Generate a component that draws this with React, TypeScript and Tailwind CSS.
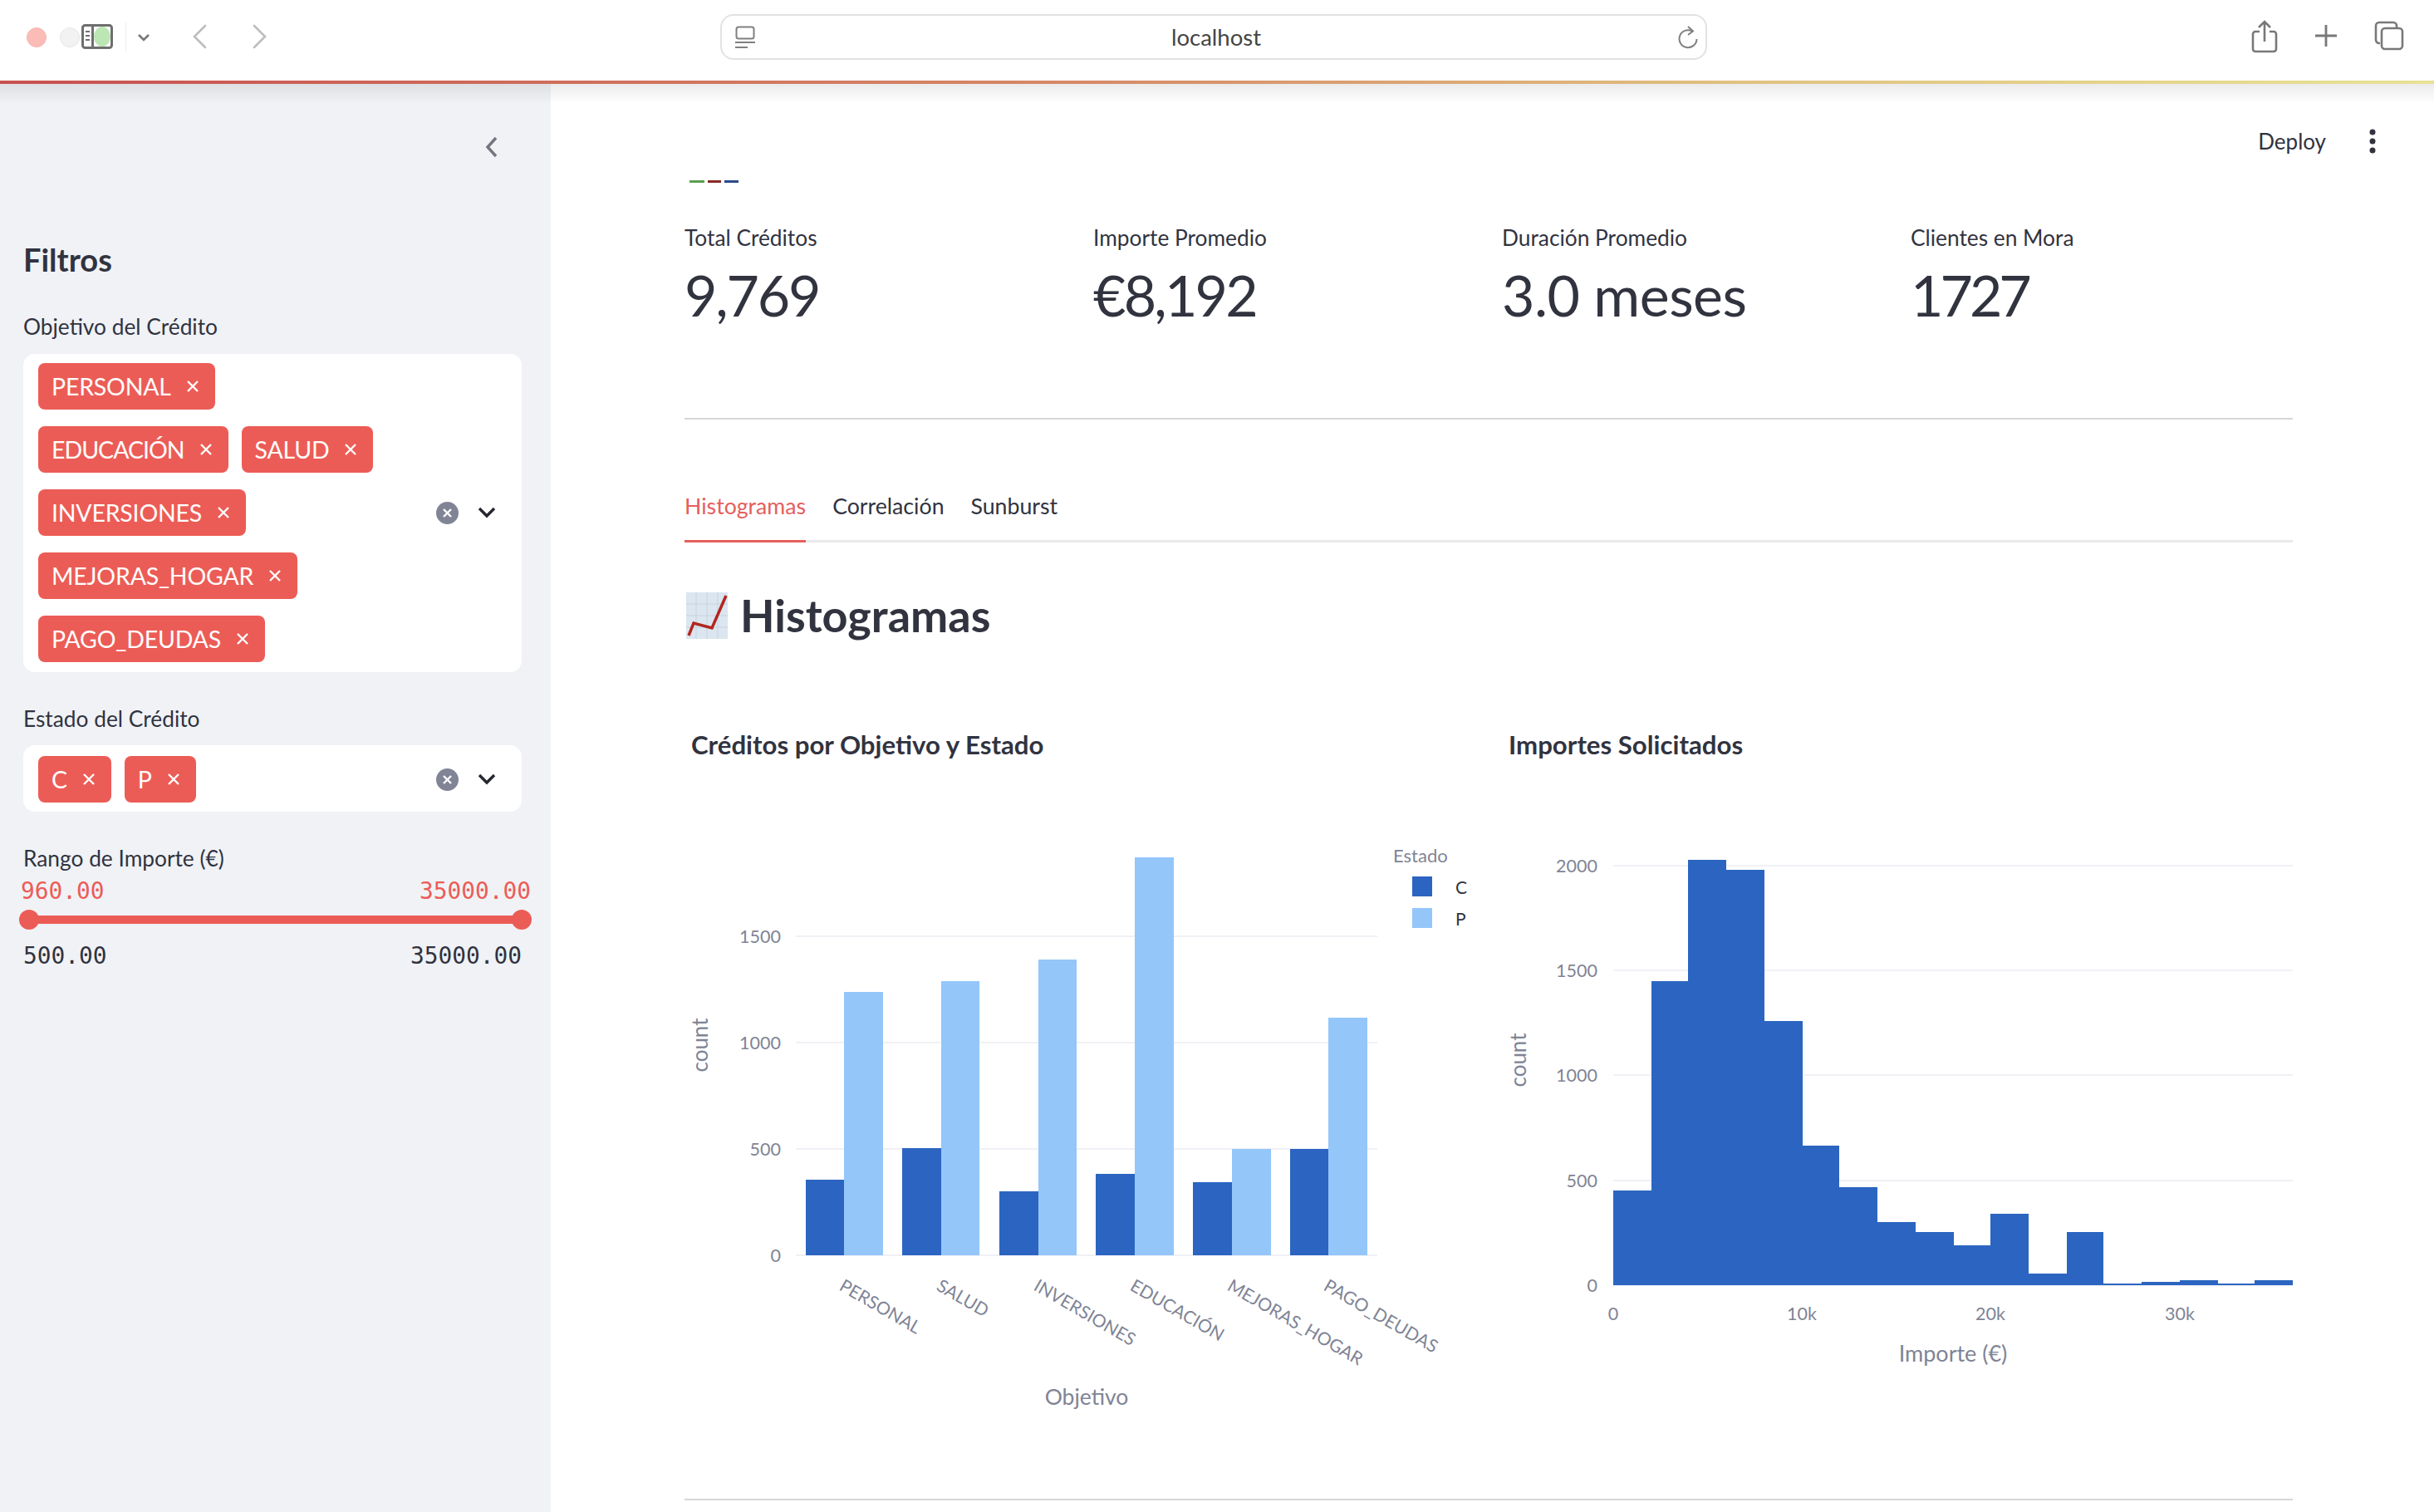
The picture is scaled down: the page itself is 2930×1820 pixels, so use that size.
const C_BLUE = "#2b65c1";
const P_BLUE = "#94c6fa";

const groupBars = [
  { name: "PERSONAL", x: 970, mid: 1016, end: 1063, c: 1420, p: 1194 },
  { name: "SALUD", x: 1086, mid: 1133, end: 1179, c: 1382, p: 1181 },
  { name: "INVERSIONES", x: 1203, mid: 1250, end: 1296, c: 1434, p: 1155 },
  { name: "EDUCACIÓN", x: 1319, mid: 1366, end: 1413, c: 1413, p: 1032 },
  { name: "MEJORAS_HOGAR", x: 1436, mid: 1483, end: 1530, c: 1423, p: 1383 },
  { name: "PAGO_DEUDAS", x: 1553, mid: 1599, end: 1646, c: 1383, p: 1225 },
];

const histEdges = [1942, 1988, 2032, 2078, 2124, 2170, 2214, 2260, 2306, 2352, 2396, 2442, 2488, 2532, 2578, 2624, 2670, 2714, 2760];
const histTops = [1433, 1181, 1035, 1047, 1229, 1379, 1429, 1471, 1483, 1499, 1461, 1533, 1483, 1545, 1543, 1541, 1545, 1541];

function Tag({ label, tight }: { label: string; tight?: boolean }) {
  return (
    <span className={`flex h-14 items-center gap-[18px] rounded-lg bg-[#ec5c56] pl-4 pr-[19px] text-[28.5px] text-white ${tight ? "tracking-[-1px]" : "tracking-[-0.2px]"}`}>
      {label}
      <svg width="16" height="16" viewBox="0 0 16 16" className="shrink-0">
        <path d="M2 2l12 12M14 2L2 14" stroke="white" strokeWidth="2.4" />
      </svg>
    </span>
  );
}

function SelectControls() {
  return (
    <div className="flex items-center gap-[23px] pr-[13px]">
      <svg width="27" height="27" viewBox="0 0 27 27">
        <circle cx="13.5" cy="13.5" r="13.5" fill="#808495" />
        <path d="M9 9l9 9M18 9l-9 9" stroke="white" strokeWidth="2.4" />
      </svg>
      <svg width="22" height="14" viewBox="0 0 22 14">
        <path d="M2 2l9 9 9-9" fill="none" stroke="#262730" strokeWidth="3.4" />
      </svg>
    </div>
  );
}

function Toolbar() {
  return (
    <div className="flex h-[97px] items-start bg-white">
      <div className="mt-[33px] ml-8 h-6 w-6 rounded-full border border-[#f5b5b0] bg-[#fbbcb7]" />
      <div className="mt-[33px] ml-4 h-6 w-6 rounded-full border border-[#e6e6e6] bg-[#f2f2f2]" />
      <svg width="38" height="30" viewBox="0 0 38 30" className="mt-[29px] ml-0.5">
        <rect x="1.5" y="1.5" width="35" height="27" rx="3" fill="white" stroke="#6f6f6f" strokeWidth="3" />
        <path d="M13.5 2v26" stroke="#6f6f6f" strokeWidth="3" />
        <ellipse cx="25" cy="15" rx="10" ry="12" fill="#bce6b4" />
        <path d="M5 9h5M5 14h5M5 19h5" stroke="#6f6f6f" strokeWidth="2" />
      </svg>
      <div className="mt-[27px] ml-[15px] h-[35px] w-px bg-[#eeeeee]" />
      <svg width="16" height="10" viewBox="0 0 16 10" className="mt-[40px] ml-[13px]">
        <path d="M2 2l6 6 6-6" fill="none" stroke="#777" strokeWidth="2.6" />
      </svg>
      <svg width="18" height="30" viewBox="0 0 18 30" className="mt-[29px] ml-[50px]">
        <path d="M16 2L3 15l13 13" fill="none" stroke="#bdbdbd" strokeWidth="2.6" strokeLinecap="round" />
      </svg>
      <svg width="18" height="30" viewBox="0 0 18 30" className="mt-[29px] ml-[55px]">
        <path d="M2 2l13 13L2 28" fill="none" stroke="#bdbdbd" strokeWidth="2.6" strokeLinecap="round" />
      </svg>
      <div className="mt-[17px] ml-[545px] flex h-[55px] w-[1188px] items-center justify-between rounded-2xl border-2 border-[#e2e2e2] pr-[8px] pl-[16px]">
        <svg width="24" height="28" viewBox="0 0 24 28">
          <rect x="1.5" y="1.5" width="21" height="14" rx="2.5" fill="none" stroke="#808080" strokeWidth="2" />
          <path d="M0 20h24M0 26h15" stroke="#808080" strokeWidth="2.2" />
        </svg>
        <span className="text-[27.5px] text-[#454545]">localhost</span>
        <svg width="26" height="30" viewBox="0 0 26 30">
          <path d="M18 7.5A10.5 10.5 0 1 0 23.5 17" fill="none" stroke="#808080" strokeWidth="2" />
          <path d="M13 2l6 5.5-6 4.5" fill="none" stroke="#808080" strokeWidth="2" />
        </svg>
      </div>
      <svg width="32" height="40" viewBox="0 0 32 40" className="mt-[24px] ml-[655px]">
        <path d="M10 14H5a3 3 0 0 0-3 3v18a3 3 0 0 0 3 3h22a3 3 0 0 0 3-3V17a3 3 0 0 0-3-3h-5" fill="none" stroke="#787878" strokeWidth="2.6" />
        <path d="M16 26V3M9 9l7-7 7 7" fill="none" stroke="#787878" strokeWidth="2.6" />
      </svg>
      <svg width="28" height="28" viewBox="0 0 28 28" className="mt-[29px] ml-[44px]">
        <path d="M14 1v26M1 14h26" stroke="#787878" strokeWidth="2.8" />
      </svg>
      <svg width="36" height="36" viewBox="0 0 36 36" className="mt-[25px] ml-[44px]">
        <path d="M7 27H6a4 4 0 0 1-4-4V6a4 4 0 0 1 4-4h17a4 4 0 0 1 4 4v2" fill="none" stroke="#787878" strokeWidth="2.6" />
        <rect x="9" y="9" width="25" height="25" rx="4" fill="none" stroke="#787878" strokeWidth="2.6" />
      </svg>
    </div>
  );
}

function Sidebar() {
  return (
    <aside className="w-[663px] shrink-0 bg-[#f0f2f6] pr-[35px] pl-7 text-[#31333f]">
      <div className="mt-[63px] flex h-[30px] justify-end pr-[28px]">
        <svg width="16" height="26" viewBox="0 0 16 26">
          <path d="M13 2L3 13l10 11" fill="none" stroke="#73757f" strokeWidth="3.4" />
        </svg>
      </div>
      <h2 className="mt-[95px] text-[38px] leading-[46px] font-bold">Filtros</h2>

      <p className="mt-[41px] text-[26.3px] leading-[34px]">Objetivo del Crédito</p>
      <div className="mt-4 flex items-center justify-between rounded-[14px] bg-white pt-[11px] pr-[18px] pb-[12px] pl-[18px]">
        <div className="flex w-[440px] flex-wrap gap-x-4 gap-y-5">
          {["PERSONAL", "EDUCACIÓN", "SALUD", "INVERSIONES", "MEJORAS_HOGAR", "PAGO_DEUDAS"].map((t) => (
            <Tag key={t} label={t} tight={t === "EDUCACIÓN"} />
          ))}
        </div>
        <SelectControls />
      </div>

      <p className="mt-[39px] text-[26.3px] leading-[34px]">Estado del Crédito</p>
      <div className="mt-[15px] flex items-center justify-between rounded-[14px] bg-white pt-[13px] pr-[18px] pb-[11px] pl-[18px]">
        <div className="flex gap-x-4">
          <Tag label="C" />
          <Tag label="P" />
        </div>
        <SelectControls />
      </div>

      <p className="mt-[39px] text-[26.3px] leading-[34px]">Rango de Importe (€)</p>
      <div className="mt-1.5 -mr-[11px] -ml-[3px] flex justify-between font-['DejaVu_Sans_Mono',monospace] text-[27.8px] leading-[34px] text-[#ec5c56]">
        <span>960.00</span>
        <span>35000.00</span>
      </div>
      <div className="relative mt-[5px] h-6">
        <div className="absolute top-[7px] right-0 left-0 h-2.5 bg-[#ec5c56]" />
        <div className="absolute top-0 -left-[5px] h-6 w-6 rounded-full bg-[#ec5c56]" />
        <div className="absolute top-0 -right-3 h-6 w-6 rounded-full bg-[#ec5c56]" />
      </div>
      <div className="mt-[15px] flex justify-between font-['DejaVu_Sans_Mono',monospace] text-[27.8px] leading-[34px]">
        <span>500.00</span>
        <span>35000.00</span>
      </div>
    </aside>
  );
}

function Metric({ label, value, valueClass }: { label: string; value: string; valueClass: string }) {
  return (
    <div>
      <p className="text-[26.3px] leading-[34px]">{label}</p>
      <p className={`mt-3.5 text-[68px] leading-[76px] ${valueClass}`}>{value}</p>
    </div>
  );
}

function BarChart() {
  const ticks = [
    { v: "0", y: 1511 },
    { v: "500", y: 1383 },
    { v: "1000", y: 1255 },
    { v: "1500", y: 1127 },
  ];
  return (
    <svg viewBox="824 916 976 880" className="block h-[880px] w-[976px]">
      {ticks.map((t) => (
        <g key={t.v}>
          <line x1="958" x2="1658" y1={t.y} y2={t.y} stroke="#f0f1f6" strokeWidth="2" />
          <text x="940" y={t.y + 8} textAnchor="end" className="fill-[#808495] text-[21.5px]">
            {t.v}
          </text>
        </g>
      ))}
      {groupBars.map((b) => (
        <g key={b.name}>
          <rect x={b.x} y={b.c} width={b.mid - b.x} height={1511 - b.c} fill={C_BLUE} />
          <rect x={b.mid} y={b.p} width={b.end - b.mid} height={1511 - b.p} fill={P_BLUE} />
          <text x={b.mid - 7} y={1552} transform={`rotate(30 ${b.mid - 7} 1552)`} className="fill-[#808495] text-[21.3px]">
            {b.name}
          </text>
        </g>
      ))}
      <text x="843" y="1258" textAnchor="middle" transform="rotate(-90 843 1258) translate(0 9)" className="fill-[#808495] text-[26px]">
        count
      </text>
      <text x="1308" y="1691" textAnchor="middle" className="fill-[#808495] text-[26.5px]">
        Objetivo
      </text>
      <text x="1677" y="1038" className="fill-[#808495] text-[22px]">
        Estado
      </text>
      <rect x="1700" y="1055" width="24" height="24" fill={C_BLUE} />
      <rect x="1700" y="1093" width="24" height="24" fill={P_BLUE} />
      <text x="1752" y="1076" className="fill-[#31333f] text-[21px]">
        C
      </text>
      <text x="1752" y="1114" className="fill-[#31333f] text-[21px]">
        P
      </text>
    </svg>
  );
}

function Histogram() {
  const ticks = [
    { v: "0", y: 1547 },
    { v: "500", y: 1421 },
    { v: "1000", y: 1294 },
    { v: "1500", y: 1168 },
    { v: "2000", y: 1042 },
  ];
  const xTicks = [
    { v: "0", x: 1942 },
    { v: "10k", x: 2169 },
    { v: "20k", x: 2396 },
    { v: "30k", x: 2624 },
  ];
  return (
    <svg viewBox="1808 916 952 880" className="block h-[880px] w-[952px]">
      {ticks.map((t) => (
        <g key={t.v}>
          <line x1="1942" x2="2760" y1={t.y} y2={t.y} stroke="#f0f1f6" strokeWidth="2" />
          <text x="1923" y={t.y + 8} textAnchor="end" className="fill-[#808495] text-[21.5px]">
            {t.v}
          </text>
        </g>
      ))}
      {histTops.map((top, i) => (
        <rect key={i} x={histEdges[i]} y={top} width={histEdges[i + 1] - histEdges[i]} height={1547 - top} fill={C_BLUE} />
      ))}
      {xTicks.map((t) => (
        <text key={t.v} x={t.x} y="1589" textAnchor="middle" className="fill-[#808495] text-[21.5px]">
          {t.v}
        </text>
      ))}
      <text x="1828" y="1276" textAnchor="middle" transform="rotate(-90 1828 1276) translate(0 9)" className="fill-[#808495] text-[26px]">
        count
      </text>
      <text x="2351" y="1639" textAnchor="middle" className="fill-[#808495] text-[27px]">
        Importe (€)
      </text>
    </svg>
  );
}

export default function App() {
  return (
    <div className="h-[1820px] w-[2930px] overflow-hidden bg-white font-['Lato',sans-serif] text-[#31333f]">
      <Toolbar />
      <div className="h-1 bg-[linear-gradient(90deg,#c8504f,#d68a68_45%,#e0c281_72%,#e8e296)]" />
      <div className="relative flex h-[1719px]">
        <div className="absolute inset-x-0 top-0 h-6 bg-linear-to-b from-[#00000014] to-transparent" />
        <Sidebar />
        <main className="min-w-0 flex-1 pr-[170px] pl-[161px]">
          <div className="mt-12 -mr-[112px] flex h-[42px] items-center justify-end gap-10">
            <span className="text-[26px]">Deploy</span>
            <svg width="32" height="32" viewBox="0 0 32 32">
              <circle cx="16" cy="5" r="3.5" fill="#31333f" />
              <circle cx="16" cy="16" r="3.5" fill="#31333f" />
              <circle cx="16" cy="27" r="3.5" fill="#31333f" />
            </svg>
          </div>

          <div className="mt-[26px] ml-1.5 flex h-[3px] gap-1">
            <div className="w-[18px] bg-[#5a9f4f]" />
            <div className="w-4 bg-[#8a2a25]" />
            <div className="w-[17px] bg-[#2a4a8a]" />
          </div>

          <div className="mt-[49px] grid grid-cols-4 gap-8">
            <Metric label="Total Créditos" value="9,769" valueClass="tracking-[-2.2px]" />
            <Metric label="Importe Promedio" value="€8,192" valueClass="tracking-[-2.8px]" />
            <Metric label="Duración Promedio" value="3.0 meses" valueClass="tracking-[-0.5px]" />
            <Metric label="Clientes en Mora" value="1727" valueClass="tracking-[-4px]" />
          </div>

          <div className="mt-[110px] h-0.5 bg-[#d6d6d8]" />

          <div className="mt-[87px] flex gap-8 border-b-[3px] border-[#e9e9ec] text-[26.7px] leading-[34px]">
            <span className="-mb-[3px] border-b-[3px] border-[#e5605c] pb-6 text-[#e5605c]">Histogramas</span>
            <span>Correlación</span>
            <span>Sunburst</span>
          </div>

          <div className="mt-[56px] flex items-center gap-[15px] pl-0.5">
            <svg width="50" height="56" viewBox="0 0 50 56">
              <rect width="50" height="56" fill="#dbe6f0" />
              <path d="M0 14h50M0 28h50M0 42h50M12 0v56M25 0v56M38 0v56" stroke="#c6d2de" strokeWidth="1" />
              <path d="M3 52l6-15 22 6L48 4" fill="none" stroke="#b3261e" strokeWidth="3.5" />
            </svg>
            <h2 className="text-[54px] leading-[64px] font-bold">Histogramas</h2>
          </div>

          <div className="mt-[103px] grid grid-cols-[976px_952px] gap-x-2">
            <div>
              <h3 className="pl-2 text-[31.2px] leading-10 font-bold">Créditos por Objetivo y Estado</h3>
              <BarChart />
            </div>
            <div>
              <h3 className="pl-2 text-[31.2px] leading-10 font-bold">Importes Solicitados</h3>
              <Histogram />
            </div>
          </div>

          <div className="mt-2 h-0.5 bg-[#d6d6d8]" />
        </main>
      </div>
    </div>
  );
}
